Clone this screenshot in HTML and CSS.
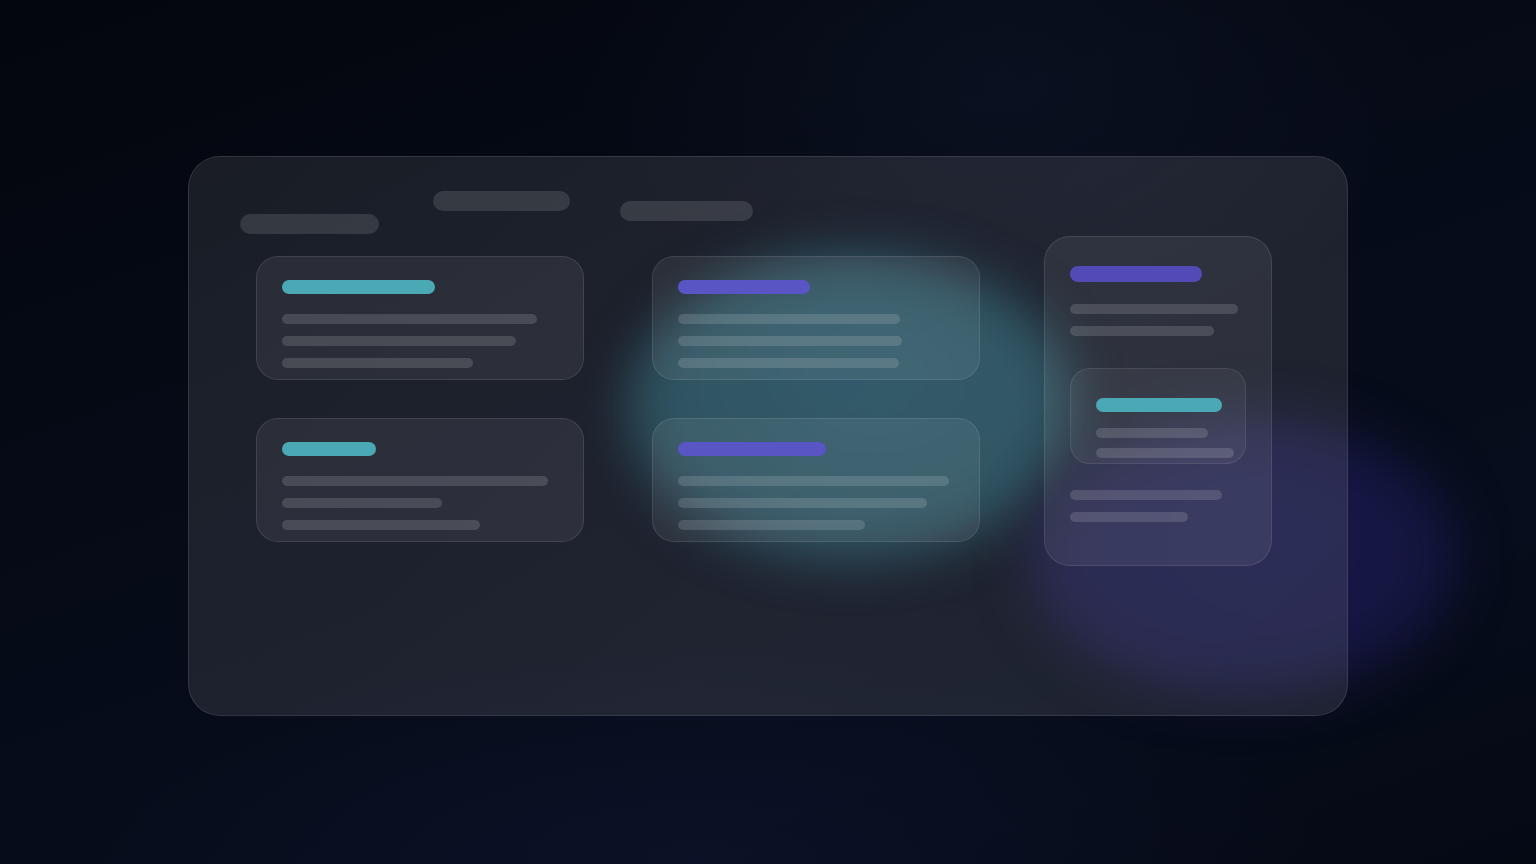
FILE: index.html
```html
<!DOCTYPE html>
<html lang="en">
<head>
<meta charset="utf-8">
<title>Dashboard skeleton</title>
<link rel="stylesheet" href="styles.css">
</head>
<body>
<div class="scene">
  <div class="blob blob-teal"></div>
  <div class="blob blob-purple"></div>
  <main class="panel">
    <header class="tabs">
      <span class="pill pill-a"></span>
      <span class="pill pill-b"></span>
      <span class="pill pill-c"></span>
    </header>
    <section class="board">
      <div class="column column-offset">
        <div class="card">
          <span class="title cyan" style="width:153px"></span>
          <div class="lines">
            <span class="line" style="width:255px"></span>
            <span class="line" style="width:234px"></span>
            <span class="line" style="width:191px"></span>
          </div>
        </div>
        <div class="card">
          <span class="title cyan" style="width:94px"></span>
          <div class="lines">
            <span class="line" style="width:266px"></span>
            <span class="line" style="width:160px"></span>
            <span class="line" style="width:198px"></span>
          </div>
        </div>
      </div>
      <div class="column column-offset column-mid">
        <div class="card">
          <span class="title violet" style="width:132px"></span>
          <div class="lines">
            <span class="line" style="width:222px"></span>
            <span class="line" style="width:224px"></span>
            <span class="line" style="width:221px"></span>
          </div>
        </div>
        <div class="card">
          <span class="title violet" style="width:148px"></span>
          <div class="lines">
            <span class="line" style="width:271px"></span>
            <span class="line" style="width:249px"></span>
            <span class="line" style="width:187px"></span>
          </div>
        </div>
      </div>
      <aside class="side-card">
        <span class="title title-lg violet-dark" style="width:132px"></span>
        <div class="lines">
          <span class="line" style="width:168px"></span>
          <span class="line" style="width:144px"></span>
        </div>
        <div class="inner-card">
          <span class="title cyan" style="width:126px"></span>
          <div class="lines lines-tight">
            <span class="line" style="width:112px"></span>
            <span class="line" style="width:138px"></span>
          </div>
        </div>
        <div class="lines">
          <span class="line" style="width:152px"></span>
          <span class="line" style="width:118px"></span>
        </div>
      </aside>
    </section>
  </main>
</div>
</body>
</html>
```

FILE: styles.css
```css
* { box-sizing: border-box; }

html, body {
  margin: 0;
  padding: 0;
}

body {
  width: 1536px;
  height: 864px;
  overflow: hidden;
  font-family: "Inter", "Liberation Sans", sans-serif;
  background:
    radial-gradient(ellipse 600px 400px at 1000px 80px, rgba(16, 24, 44, 0.45), transparent 70%),
    radial-gradient(ellipse 900px 300px at 700px 860px, rgba(14, 22, 48, 0.55), transparent 70%),
    linear-gradient(160deg, #03060d 0%, #060b18 45%, #070d1c 75%, #050914 100%);
}

.scene {
  position: relative;
  width: 1536px;
  height: 864px;
  padding-top: 156px;
  display: flex;
  justify-content: center;
  align-items: flex-start;
}

.blob {
  position: absolute;
  border-radius: 50%;
  z-index: 0;
}

.blob-teal {
  left: 628px;
  top: 254px;
  width: 446px;
  height: 306px;
  background: radial-gradient(ellipse at 55% 40%, #1d4a5b 0%, #1a4252 55%, #173847 100%);
  filter: blur(24px);
}

.blob-purple {
  left: 1030px;
  top: 418px;
  width: 424px;
  height: 276px;
  background: radial-gradient(ellipse at 55% 45%, #161745 0%, #151641 60%, #13143b 100%);
  filter: blur(26px);
}

.panel {
  position: relative;
  z-index: 1;
  width: 1160px;
  height: 560px;
  border-radius: 32px;
  border: 1px solid rgba(255, 255, 255, 0.1);
  background: linear-gradient(135deg, rgba(255, 255, 255, 0.085) 0%, rgba(255, 255, 255, 0.1) 60%, rgba(255, 255, 255, 0.095) 100%);
  padding: 34px 0 0 51px;
}

.tabs {
  display: flex;
  align-items: flex-start;
  gap: 54px;
  height: 43px;
}

.pill {
  display: block;
  height: 20px;
  border-radius: 10px;
  background: rgba(255, 255, 255, 0.12);
}

.pill-a { width: 139px; margin-top: 23px; }
.pill-b { width: 137px; }
.pill-c { width: 133px; margin-top: 10px; margin-left: -4px; }

.board {
  display: flex;
  align-items: flex-start;
  margin-top: 2px;
  padding-left: 16px;
}

.column {
  display: flex;
  flex-direction: column;
  gap: 38px;
  width: 328px;
}

.column-offset { margin-top: 20px; }
.column-mid { margin-left: 68px; margin-right: 64px; }

.card {
  width: 328px;
  height: 124px;
  border-radius: 22px;
  border: 1px solid rgba(255, 255, 255, 0.1);
  background: rgba(255, 255, 255, 0.065);
  padding: 23px 25px 11px;
  display: flex;
  flex-direction: column;
  align-items: flex-start;
  gap: 20px;
}

.title {
  display: block;
  height: 14px;
  border-radius: 7px;
}

.title-lg { height: 16px; border-radius: 8px; }

.cyan { background: #4aa9b5; }
.violet { background: #5a55c4; }
.violet-dark { background: #524ab6; }

.lines {
  display: flex;
  flex-direction: column;
  gap: 12px;
}

.lines-tight { gap: 10px; }

.line {
  display: block;
  height: 10px;
  border-radius: 5px;
  background: rgba(255, 255, 255, 0.14);
}

.side-card {
  width: 228px;
  height: 330px;
  border-radius: 26px;
  border: 1px solid rgba(255, 255, 255, 0.1);
  background: rgba(255, 255, 255, 0.065);
  padding: 29px 25px 0;
  display: flex;
  flex-direction: column;
  align-items: flex-start;
}

.side-card > .title { margin-bottom: 22px; }

.inner-card {
  width: 176px;
  height: 96px;
  margin-top: 32px;
  margin-bottom: 26px;
  border-radius: 20px;
  border: 1px solid rgba(255, 255, 255, 0.09);
  background: rgba(255, 255, 255, 0.05);
  padding: 29px 25px 0;
  display: flex;
  flex-direction: column;
  align-items: flex-start;
  gap: 16px;
}
```
